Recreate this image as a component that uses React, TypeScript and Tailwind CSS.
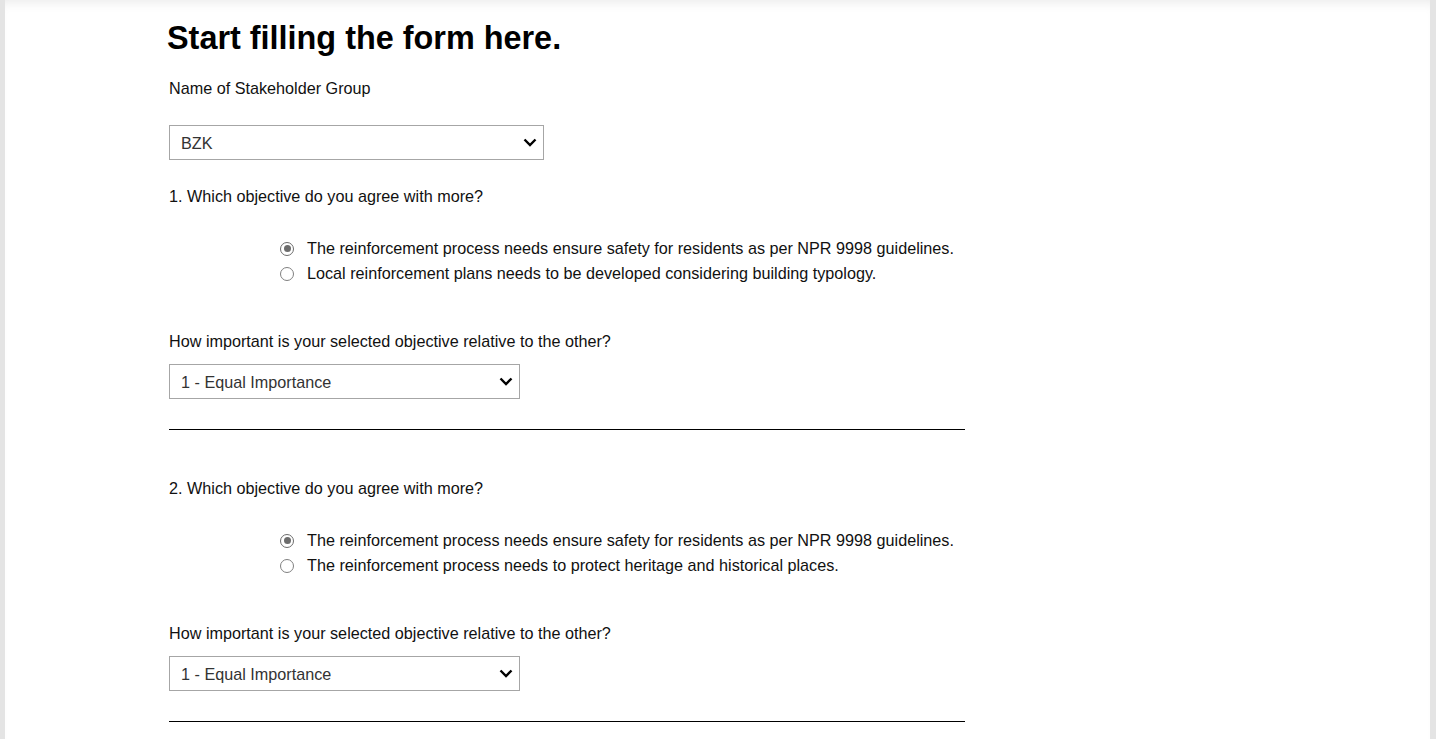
import { useState } from 'react';

interface Question {
  id: number;
  options: string[];
}

const QUESTIONS: Question[] = [
  {
    id: 1,
    options: [
      'The reinforcement process needs ensure safety for residents as per NPR 9998 guidelines.',
      'Local reinforcement plans needs to be developed considering building typology.',
    ],
  },
  {
    id: 2,
    options: [
      'The reinforcement process needs ensure safety for residents as per NPR 9998 guidelines.',
      'The reinforcement process needs to protect heritage and historical places.',
    ],
  },
];

function Chevron() {
  return (
    <svg width="14" height="9" viewBox="0 0 14 9" className="shrink-0">
      <path d="M1.5 1.5 L7 7 L12.5 1.5" fill="none" stroke="#000" strokeWidth="2.4" />
    </svg>
  );
}

function FakeSelect({ value, width }: { value: string; width: string }) {
  return (
    <div
      className={`${width} h-[35px] border border-[#a6a6a6] bg-white flex items-center justify-between pl-[11px] pr-[6px] text-[#333] text-[16.2px]`}
    >
      <span className="mt-[2px]">{value}</span>
      <Chevron />
    </div>
  );
}

function Radio({ checked }: { checked: boolean }) {
  return checked ? (
    <span className="w-[14px] h-[14px] rounded-full border-[1.5px] border-[#6c6c6c] flex items-center justify-center shrink-0">
      <span className="w-[7px] h-[7px] rounded-full bg-[#6c6c6c]" />
    </span>
  ) : (
    <span className="w-[14px] h-[14px] rounded-full border border-[#808080] shrink-0" />
  );
}

function QuestionBlock({ q }: { q: Question }) {
  const [selected, setSelected] = useState(0);
  return (
    <div>
      <p className="pt-[1px] leading-[18px]">{q.id}. Which objective do you agree with more?</p>
      <div className="mt-[31px] ml-[111px]">
        {q.options.map((opt, i) => (
          <label
            key={i}
            onClick={() => setSelected(i)}
            className="flex items-center h-[25px] cursor-pointer"
          >
            <Radio checked={selected === i} />
            <span className="ml-[13px]">{opt}</span>
          </label>
        ))}
      </div>
      <p className="mt-[46px] leading-[18px]">How important is your selected objective relative to the other?</p>
      <div className="mt-[14px]">
        <FakeSelect value="1 - Equal Importance" width="w-[351px]" />
      </div>
      <div className="mt-[30px] w-[796px] border-t border-black" />
    </div>
  );
}

export default function App() {
  return (
    <div className="min-h-screen bg-[#e4e4e4] pl-[5px] pr-[6px] font-['Liberation_Sans',Arial,sans-serif] text-[16.2px] text-[#111]">
      <div className="min-h-screen bg-white shadow-[inset_0_10px_12px_-8px_rgba(0,0,0,0.09)] pl-[164px] pt-[20px]">
        <h1 className="text-[32.4px] leading-[36px] font-bold text-black -ml-[2px]">
          Start filling the form here.
        </h1>

        <p className="mt-[23px] leading-[18px]">Name of Stakeholder Group</p>
        <div className="mt-[28px]">
          <FakeSelect value="BZK" width="w-[375px]" />
        </div>

        <div className="mt-[26px]">
          <QuestionBlock q={QUESTIONS[0]} />
        </div>
        <div className="mt-[48px]">
          <QuestionBlock q={QUESTIONS[1]} />
        </div>
        <div className="h-[40px]" />
      </div>
    </div>
  );
}
